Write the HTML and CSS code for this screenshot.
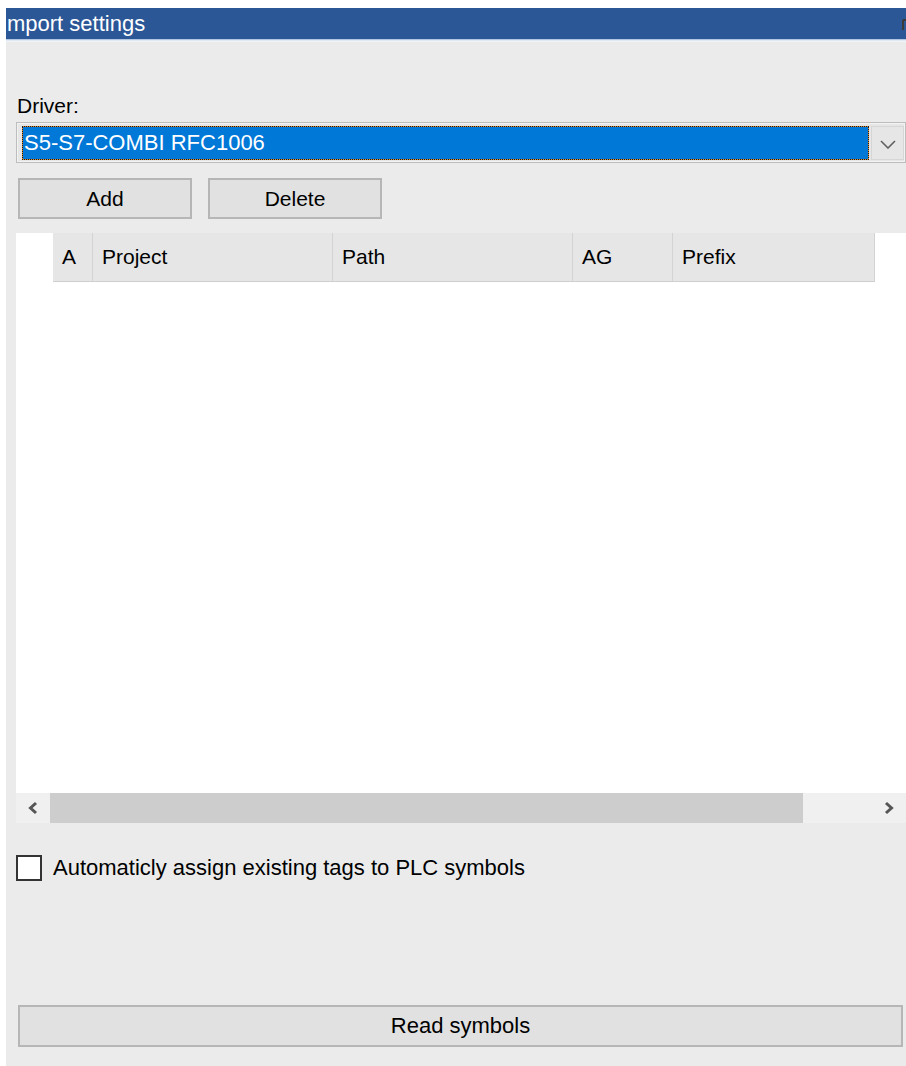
FILE: index.html
```html
<!DOCTYPE html>
<html lang="en">
<head>
<meta charset="utf-8">
<title>Import settings</title>
<link rel="stylesheet" href="styles.css">
</head>
<body>
<div class="window">
  <div class="titlebar">
    <span class="title-text">mport settings</span>
    <svg class="title-glyph" width="4" height="12" viewBox="0 0 4 12"><path d="M1 1v10M1 1h3" stroke="#3a3a3a" stroke-width="2" fill="none"/></svg>
  </div>
  <div class="title-edge"></div>

  <div class="content">
    <label class="field-label">Driver:</label>
    <div class="combo">
      <div class="combo-value">S5-S7-COMBI RFC1006</div>
      <div class="combo-arrow">
        <svg width="16" height="9" viewBox="0 0 16 9"><polyline points="1,1 8,8 15,1" fill="none" stroke="#606060" stroke-width="1.6"/></svg>
      </div>
    </div>

    <div class="btn-row">
      <button class="btn btn-small">Add</button>
      <button class="btn btn-small">Delete</button>
    </div>

    <div class="grid">
      <div class="grid-header">
        <div class="col">A</div>
        <div class="col">Project</div>
        <div class="col">Path</div>
        <div class="col">AG</div>
        <div class="col">Prefix</div>
      </div>
      <div class="grid-body"></div>
      <div class="hscroll">
        <div class="scroll-arrow">
          <svg width="12" height="14" viewBox="0 0 12 14"><polyline points="9,2 3.5,7 9,12" fill="none" stroke="#555555" stroke-width="3"/></svg>
        </div>
        <div class="scroll-track">
          <div class="scroll-thumb"></div>
        </div>
        <div class="scroll-arrow">
          <svg width="12" height="14" viewBox="0 0 12 14"><polyline points="3,2 8.5,7 3,12" fill="none" stroke="#555555" stroke-width="3"/></svg>
        </div>
      </div>
    </div>

    <label class="check-row">
      <span class="check-box"></span>
      <span class="check-text">Automaticly assign existing tags to PLC symbols</span>
    </label>

    <button class="btn btn-wide">Read symbols</button>
  </div>
</div>
</body>
</html>
```

FILE: styles.css
```css
html, body {
  margin: 0;
  padding: 0;
  background: #ffffff;
}

body {
  font-family: "Liberation Sans", Arial, sans-serif;
  font-size: 21px;
  color: #000;
}

.window {
  margin: 8px 0 0 6px;
  width: 900px;
  height: 1058px;
  background: #ebebeb;
  display: flex;
  flex-direction: column;
  overflow: hidden;
}

/* caption bar */
.titlebar {
  position: relative;
  height: 31px;
  background: #2b5797;
  color: #ffffff;
  display: flex;
  align-items: center;
  padding-left: 1px;
  font-size: 22px;
}

.title-glyph {
  position: absolute;
  right: 0;
  top: 11px;
}

.title-edge {
  height: 3px;
  background: linear-gradient(#9db5d8, #edf2f9 60%, #f2f5f9);
}

.content {
  display: flex;
  flex-direction: column;
  padding-left: 10px;
}

.field-label {
  display: block;
  margin-top: 52px;
  line-height: 24px;
  height: 24px;
  padding-left: 1px;
}

/* drop-down list */
.combo {
  margin-top: 4px;
  height: 41px;
  box-sizing: border-box;
  border: 1px solid #bdbdbd;
  box-shadow: inset 0 0 0 1px #f3f3f3;
  background: #e6e6e6;
  display: flex;
  padding: 3px 1px 2px 5px;
}

.combo-value {
  flex: 1;
  background: #0078d7;
  color: #ffffff;
  border: 1px solid #e38b2c;
  outline: 1px dotted #1a1a1a;
  outline-offset: -1px;
  display: flex;
  align-items: center;
  padding-left: 1px;
  font-size: 22px;
}

.combo-arrow {
  width: 33px;
  margin-left: 2px;
  display: flex;
  align-items: center;
  justify-content: center;
  border: 1px solid #d6d6d6;
  box-sizing: border-box;
  padding-top: 2px;
}

/* push buttons */
.btn {
  font-family: inherit;
  font-size: 21px;
  color: #000;
  background: #e1e1e1;
  border: 2px solid #b6b6b6;
  padding: 0;
  margin: 0;
  box-sizing: border-box;
}

.btn-row {
  margin-top: 15px;
  display: flex;
  gap: 16px;
  padding-left: 2px;
}

.btn-small {
  width: 174px;
  height: 41px;
}

.btn-wide {
  margin-top: 124px;
  margin-left: 2px;
  width: 885px;
  height: 42px;
  font-size: 22px;
}

/* project list */
.grid {
  margin-top: 14px;
  height: 590px;
  background: #ffffff;
  display: flex;
  flex-direction: column;
}

.grid-header {
  align-self: flex-start;
  margin-left: 37px;
  display: grid;
  grid-template-columns: 40px 240px 240px 100px 202px;
  height: 49px;
  box-sizing: border-box;
  border-bottom: 1px solid #cfcfcf;
  background: #e6e6e6;
}

.col {
  display: flex;
  align-items: center;
  padding-left: 9px;
  border-right: 1px solid #d3d3d3;
  font-size: 21px;
}

.grid-body {
  flex: 1;
}

.hscroll {
  height: 30px;
  display: flex;
  background: #f0f0f0;
}

.scroll-arrow {
  width: 34px;
  display: flex;
  align-items: center;
  justify-content: center;
}

.scroll-track {
  flex: 1;
  display: flex;
}

.scroll-thumb {
  width: 753px;
  background: #cdcdcd;
}

/* option checkbox */
.check-row {
  margin-top: 32px;
  display: flex;
  align-items: center;
  height: 26px;
  gap: 11px;
}

.check-box {
  width: 26px;
  height: 26px;
  box-sizing: border-box;
  border: 2px solid #333333;
  background: #ffffff;
}

.check-text {
  font-size: 22px;
  line-height: 26px;
}
```
